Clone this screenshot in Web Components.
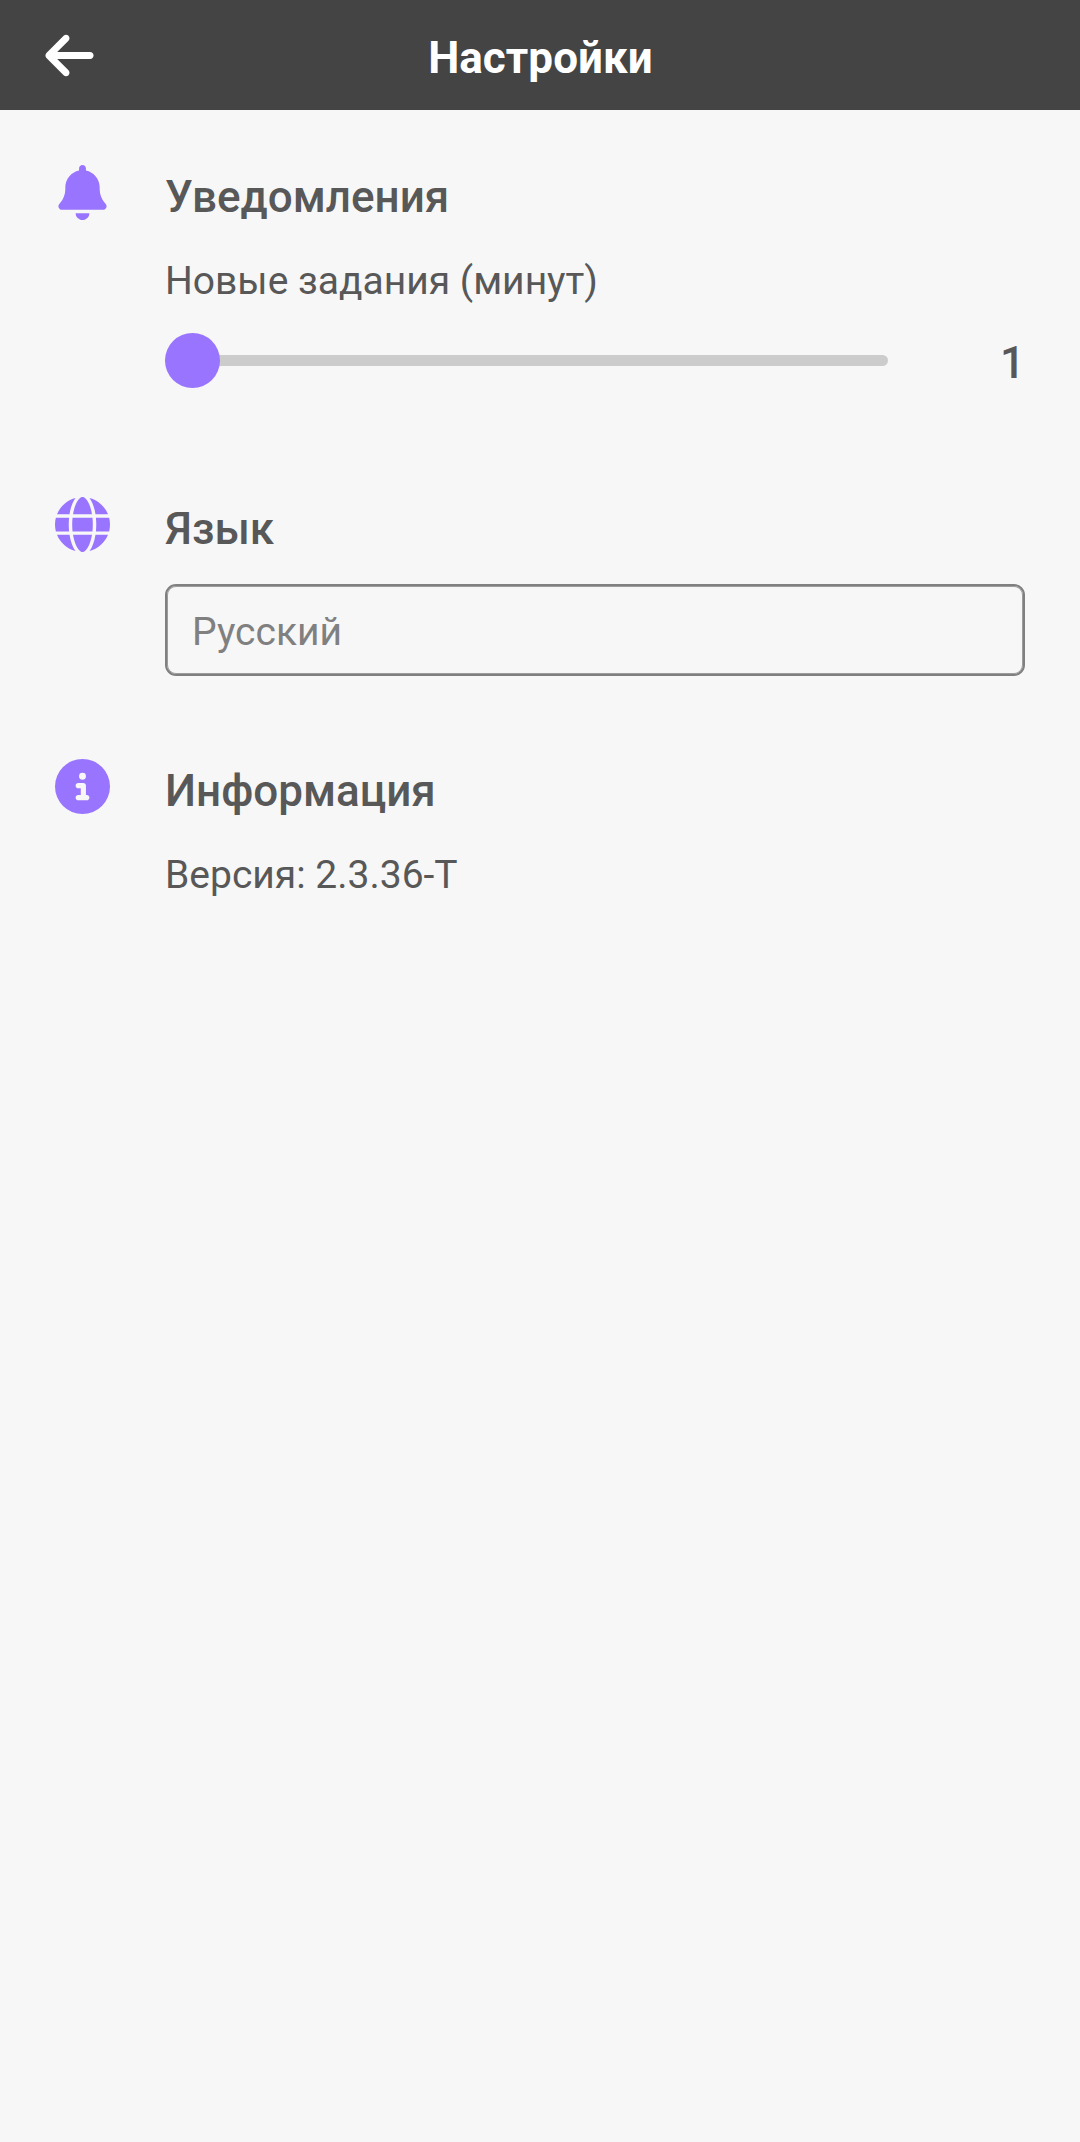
<!DOCTYPE html>
<html lang="ru">
<head>
<meta charset="utf-8">
<title>Настройки</title>
<style>
html,body{margin:0;background:#f7f7f7}
body{font-family:Roboto,"Noto Sans",sans-serif;color:#585858;min-height:2142px}
</style>
</head>
<body>
<settings-page></settings-page>
<script>
const ICONS={
back:['0 0 448 512','M9.4 233.4c-12.5 12.5-12.5 32.8 0 45.3l160 160c12.5 12.5 32.8 12.5 45.3 0s12.5-32.8 0-45.3L109.2 288 416 288c17.7 0 32-14.3 32-32s-14.3-32-32-32l-306.7 0L214.6 118.6c12.5-12.5 12.5-32.8 0-45.3s-32.8-12.5-45.3 0l-160 160z'],
bell:['0 0 448 512','M224 0c-17.7 0-32 14.3-32 32V51.2C119 66 64 130.6 64 208v18.8c0 47-17.3 92.4-48.5 127.6l-7.4 8.3c-8.4 9.4-10.4 22.9-5.3 34.4S19.4 416 32 416H416c12.6 0 24-7.4 29.2-18.9s3.1-25-5.3-34.4l-7.4-8.3C401.3 319.2 384 273.9 384 226.8V208c0-77.4-55-142-128-156.8V32c0-17.7-14.3-32-32-32zm45.3 493.3c12-12 18.7-28.3 18.7-45.3H224 160c0 17 6.7 33.3 18.7 45.3s28.3 18.7 45.3 18.7s33.3-6.7 45.3-18.7z'],
globe:['0 0 512 512','M352 256c0 22.2-1.2 43.6-3.3 64H163.3c-2.2-20.4-3.3-41.8-3.3-64s1.2-43.6 3.3-64H348.7c2.2 20.4 3.3 41.8 3.3 64zm28.8-64H503.9c5.3 20.5 8.1 41.9 8.1 64s-2.8 43.5-8.1 64H380.8c2.1-20.6 3.2-42 3.2-64s-1.1-43.4-3.2-64zm112.6-32H376.7c-10-63.9-29.8-117.4-55.3-151.6c78.3 20.7 142 77.5 171.9 151.6zm-149.1 0H167.7c6.1-36.4 15.5-68.6 27-94.7c10.5-23.6 22.2-40.7 33.5-51.5C239.4 3.2 248.7 0 256 0s16.6 3.2 27.8 13.8c11.3 10.8 23 27.9 33.5 51.5c11.6 26 20.9 58.2 27 94.7zm-209 0H18.6C48.6 85.9 112.2 29.1 190.6 8.4C165.1 42.6 145.3 96.1 135.3 160zM8.1 192H131.2c-2.1 20.6-3.2 42-3.2 64s1.1 43.4 3.2 64H8.1C2.8 299.5 0 278.1 0 256s2.8-43.5 8.1-64zM194.7 446.6c-11.6-26-20.9-58.2-27-94.6H344.3c-6.1 36.4-15.5 68.6-27 94.6c-10.5 23.6-22.2 40.7-33.5 51.5C272.6 508.8 263.3 512 256 512s-16.6-3.2-27.8-13.8c-11.3-10.8-23-27.9-33.5-51.5zM135.3 352c10 63.9 29.8 117.4 55.3 151.6C112.2 482.9 48.6 426.1 18.6 352H135.3zm358.1 0c-30 74.1-93.6 130.9-171.9 151.6c25.5-34.2 45.2-87.7 55.3-151.6H493.4z'],
info:['0 0 512 512','M256 512A256 256 0 1 0 256 0a256 256 0 1 0 0 512zM216 336h24V272H216c-13.3 0-24-10.7-24-24s10.7-24 24-24h48c13.3 0 24 10.7 24 24v88h8c13.3 0 24 10.7 24 24s-10.7 24-24 24H216c-13.3 0-24-10.7-24-24s10.7-24 24-24zm40-208a32 32 0 1 1 0 64 32 32 0 1 1 0-64z']
};
function define(name,render){
  customElements.define(name,class extends HTMLElement{
    constructor(){super();this.attachShadow({mode:'open'})}
    connectedCallback(){this.shadowRoot.innerHTML=render(this)}
  });
}
define('app-icon',el=>{
  const [box,path]=ICONS[el.getAttribute('name')];
  return `<style>:host{display:block;width:55px;height:55px;flex:none}svg{display:block;width:100%;height:100%;fill:currentColor}</style>
  <svg viewBox="${box}" aria-hidden="true"><path d="${path}"/></svg>`;
});
define('app-header',()=>`<style>
  :host{display:grid;grid-template-columns:55px 1fr 55px;align-items:center;height:110px;box-sizing:border-box;padding:0 42px;background:#444;color:#fff}
  h1{margin:0;padding:6px 0 0 1px;font-size:44px;line-height:52px;font-weight:700;letter-spacing:.06px;text-align:center}
  </style><app-icon name="back"></app-icon><h1><slot></slot></h1>`);
define('settings-section',el=>`<style>
  :host{display:flex;gap:55px}
  app-icon{color:#9975ff}
  .body{flex:1;min-width:0}
  h2{margin:0;padding-top:6px;font-size:44px;line-height:52px;font-weight:500}
  </style><app-icon name="${el.getAttribute('icon')}"></app-icon>
  <div class="body"><h2>${el.getAttribute('heading')}</h2><slot></slot></div>`);
define('settings-text',()=>`<style>:host{display:block;margin-top:36px;font-size:39px;line-height:45px}</style><slot></slot>`);
define('value-slider',el=>`<style>
  :host{display:flex;align-items:center;justify-content:space-between;height:55px;margin-top:29px;padding-bottom:26px}
  .track{display:flex;align-items:center;width:723px;height:11px;border-radius:5.5px;background:#ccc}
  .thumb{width:55px;height:55px;flex:none;border-radius:50%;background:#9975ff}
  output{font-size:44px;line-height:52px;font-weight:500;padding-top:4px}
  </style><div class="track"><div class="thumb"></div></div><output>${el.getAttribute('value')}</output>`);
define('select-field',()=>`<style>
  :host{display:flex;align-items:center;box-sizing:border-box;height:92px;margin-top:29px;padding:4px 25px 0;border:2px solid #808080;box-shadow:inset 0 0 0 1px #9c9c9c;border-radius:11px;color:#808080;font-size:39px;line-height:45px}
  </style><slot></slot>`);
define('settings-page',()=>`<style>
  :host{display:block}
  main{display:flex;flex-direction:column;gap:83px;padding:55px}
  </style><app-header>Настройки</app-header>
  <main>
    <settings-section icon="bell" heading="Уведомления"><settings-text>Новые задания (минут)</settings-text><value-slider value="1"></value-slider></settings-section>
    <settings-section icon="globe" heading="Язык"><select-field>Русский</select-field></settings-section>
    <settings-section icon="info" heading="Информация"><settings-text>Версия: 2.3.36-T</settings-text></settings-section>
  </main>`);
</script>
</body>
</html>
